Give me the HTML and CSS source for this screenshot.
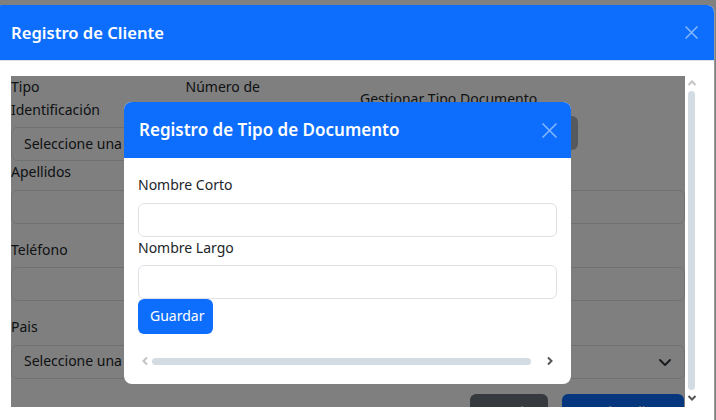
FILE: index.html
```html
<!DOCTYPE html>
<html lang="es">
<head>
<meta charset="utf-8">
<title>Registro de Cliente</title>
<link rel="stylesheet" href="styles.css">
</head>
<body>
<div class="modal">
  <div class="modal-header">
    <h5 class="modal-title">Registro de Cliente</h5>
    <span class="btn-close">
      <svg width="13" height="13" viewBox="0 0 13 13"><path d="M0.5 0.5 L12.5 12.5 M12.5 0.5 L0.5 12.5" stroke="#86b7fe" stroke-width="1.5" fill="none"/></svg>
    </span>
  </div>
  <div class="modal-body">
    <div class="scroller">
      <div class="scroll-content">
        <div class="form">
          <div class="row row-4">
            <div class="field">
              <label class="label">Tipo<br>Identificación</label>
              <div class="control select"><span class="sel-text">Seleccione una opción</span>
                <svg class="chev" width="16" height="12" viewBox="0 0 16 12"><path d="M3 4 L8 9 L13 4" stroke="#343a40" stroke-width="2" fill="none" stroke-linecap="round" stroke-linejoin="round"/></svg>
              </div>
            </div>
            <div class="field">
              <label class="label">Número de<br>Documento</label>
              <input class="control" type="text">
            </div>
            <div class="field span-2">
              <label class="label label-pad">Gestionar Tipo Documento</label>
              <button class="btn btn-light-secondary" type="button">Gestionar</button>
            </div>
          </div>
          <div class="row row-2 gap-row">
            <div class="field">
              <label class="label">Apellidos</label>
              <input class="control" type="text">
            </div>
            <div class="field">
              <label class="label">Nombres</label>
              <input class="control" type="text">
            </div>
          </div>
          <div class="row row-2 gap-row">
            <div class="field">
              <label class="label">Teléfono</label>
              <input class="control" type="text">
            </div>
            <div class="field">
              <label class="label">Correo</label>
              <input class="control" type="text">
            </div>
          </div>
          <div class="row row-2 gap-row">
            <div class="field">
              <label class="label">Pais</label>
              <div class="control select"><span class="sel-text">Seleccione una opción</span>
                <svg class="chev" width="16" height="12" viewBox="0 0 16 12"><path d="M3 4 L8 9 L13 4" stroke="#343a40" stroke-width="2" fill="none" stroke-linecap="round" stroke-linejoin="round"/></svg>
              </div>
            </div>
            <div class="field">
              <label class="label">Ciudad</label>
              <div class="control select"><span class="sel-text">Seleccione una opción</span>
                <svg class="chev" width="16" height="12" viewBox="0 0 16 12"><path d="M3 4 L8 9 L13 4" stroke="#343a40" stroke-width="2" fill="none" stroke-linecap="round" stroke-linejoin="round"/></svg>
              </div>
            </div>
          </div>
          <div class="actions">
            <button class="btn btn-secondary" type="button">Cancelar</button>
            <button class="btn btn-primary btn-save" type="button">Guardar Cliente</button>
          </div>
        </div>
        <div class="backdrop"></div>
        <div class="inner-modal">
          <div class="im-header">
            <h5 class="im-title">Registro de Tipo de Documento</h5>
            <span class="btn-close">
              <svg width="15" height="15" viewBox="0 0 15 15"><path d="M0.5 0.5 L14.5 14.5 M14.5 0.5 L0.5 14.5" stroke="#86b7fe" stroke-width="1.5" fill="none"/></svg>
            </span>
          </div>
          <div class="im-body">
            <label class="label">Nombre Corto</label>
            <input class="control" type="text">
            <label class="label">Nombre Largo</label>
            <input class="control" type="text">
            <button class="btn btn-primary btn-guardar" type="button">Guardar</button>
            <div class="hscroll">
              <span class="sb-arrow">
                <svg width="8" height="10" viewBox="0 0 8 10"><path d="M6 1.5 L2.5 5 L6 8.5" stroke="#c3c3c3" stroke-width="2" fill="none"/></svg>
              </span>
              <div class="h-track"><div class="h-thumb"></div></div>
              <span class="sb-arrow">
                <svg width="8" height="10" viewBox="0 0 8 10"><path d="M2 1.5 L5.5 5 L2 8.5" stroke="#555" stroke-width="2" fill="none"/></svg>
              </span>
            </div>
          </div>
        </div>
      </div>
      <div class="vscroll">
        <span class="v-arrow">
          <svg width="10" height="8" viewBox="0 0 10 8"><path d="M1.5 6 L5 2.5 L8.5 6" stroke="#c3c3c3" stroke-width="2" fill="none"/></svg>
        </span>
        <div class="v-thumb"></div>
        <span class="v-arrow">
          <svg width="10" height="8" viewBox="0 0 10 8"><path d="M1.5 2 L5 5.5 L8.5 2" stroke="#555" stroke-width="2" fill="none"/></svg>
        </span>
      </div>
    </div>
  </div>
</div>
</body>
</html>
```

FILE: styles.css
```css
html, body {
  margin: 0;
  height: 420px;
  overflow: hidden;
}
body {
  background: #808080;
  padding-top: 5px;
  box-sizing: border-box;
  font-family: "Noto Sans", "Open Sans", sans-serif;
  font-size: 14px;
  line-height: 22.5px;
  color: #212529;
}
* { box-sizing: border-box; }

.modal {
  margin-left: -5px;
  width: 720px;
  height: 500px;
  background: #fff;
  border-radius: 8px 8px 0 0;
  border-right: 1px solid #9a9a9a;
}
.modal-header {
  height: 56px;
  background: #0d6efd;
  border-bottom: 1px solid #dee2e6;
  border-radius: 7px 7px 0 0;
  display: flex;
  align-items: center;
  justify-content: space-between;
  padding: 0 16px 0 16px;
}
.modal-title {
  margin: 0;
  color: #fff;
  font-size: 16.6px;
  font-weight: 600;
  line-height: 24px;
}
.btn-close {
  display: flex;
  align-items: center;
}
.modal-body {
  padding: 15px 16px 0 16px;
}
.scroller {
  display: flex;
  height: 331px;
}
.scroll-content {
  position: relative;
  flex: 1;
  min-width: 0;
  overflow: hidden;
}
.form {
  display: flex;
  flex-direction: column;
}
.row {
  display: grid;
  column-gap: 24px;
}
.row-4 { grid-template-columns: repeat(4, minmax(0, 1fr)); }
.row-2 { grid-template-columns: repeat(2, minmax(0, 1fr)); }
.gap-row { margin-bottom: 15px; }
.span-2 { grid-column: span 2; }
.field {
  display: flex;
  flex-direction: column;
  align-items: stretch;
  min-width: 0;
}
.label {
  display: block;
  margin-bottom: 6px;
  white-space: nowrap;
}
.label-pad { padding-top: 11.5px; }
.control {
  display: block;
  width: 100%;
  height: 34px;
  border: 1px solid #dee2e6;
  border-radius: 6px;
  background: #fff;
  font: inherit;
  color: #212529;
  padding: 0 12px;
  margin: 0;
}
.select {
  display: flex;
  align-items: center;
  justify-content: space-between;
  white-space: nowrap;
  overflow: hidden;
}
.sel-text {
  overflow: hidden;
  min-width: 0;
}
.select .chev { flex: none; margin-right: -1px; }
.btn {
  font: inherit;
  border: none;
  border-radius: 6px;
  color: #fff;
  padding: 0 12px;
  height: 35px;
  white-space: nowrap;
  cursor: pointer;
}
.btn-light-secondary {
  width: 218px;
  height: 34px;
  background: #adb5bd;
}
.btn-primary { background: #0d6efd; }
.btn-secondary { background: #6c757d; width: 78px; }
.btn-save { width: 122px; }
.actions {
  display: flex;
  justify-content: flex-end;
  align-items: flex-start;
  gap: 14px;
  padding-right: 1px;
}
.actions .btn {
  height: 38px;
  padding: 0;
}
.backdrop {
  position: absolute;
  inset: 0;
  background: rgba(0, 0, 0, 0.5);
}
.inner-modal {
  position: absolute;
  left: 113px;
  top: 26px;
  width: 447px;
  height: 282px;
  background: #fff;
  border-radius: 8px;
  overflow: hidden;
}
.im-header {
  height: 56px;
  background: #0d6efd;
  display: flex;
  align-items: center;
  justify-content: space-between;
  padding: 0 14px 0 15px;
}
.im-title {
  margin: 0;
  color: #fff;
  font-size: 17px;
  font-weight: 600;
  line-height: 26px;
}
.im-body {
  padding: 16px 14px;
  display: flex;
  flex-direction: column;
}
.btn-guardar {
  align-self: flex-start;
  width: 75px;
}
.hscroll {
  margin-top: 20px;
  height: 14px;
  display: flex;
  align-items: center;
}
.sb-arrow {
  width: 14px;
  display: flex;
  justify-content: center;
  align-items: center;
}
.h-track { flex: 1; display: flex; }
.h-thumb {
  width: 379px;
  height: 7px;
  border-radius: 4px;
  background: #d3dbe3;
}
.vscroll {
  width: 13px;
  display: flex;
  flex-direction: column;
  align-items: center;
  padding: 1px 0 3px 0;
}
.v-arrow {
  height: 12px;
  display: flex;
  align-items: center;
  justify-content: center;
}
.v-thumb {
  flex: 1;
  width: 7px;
  margin: 2px 0;
  border-radius: 4px;
  background: #d3dbe3;
}
```
